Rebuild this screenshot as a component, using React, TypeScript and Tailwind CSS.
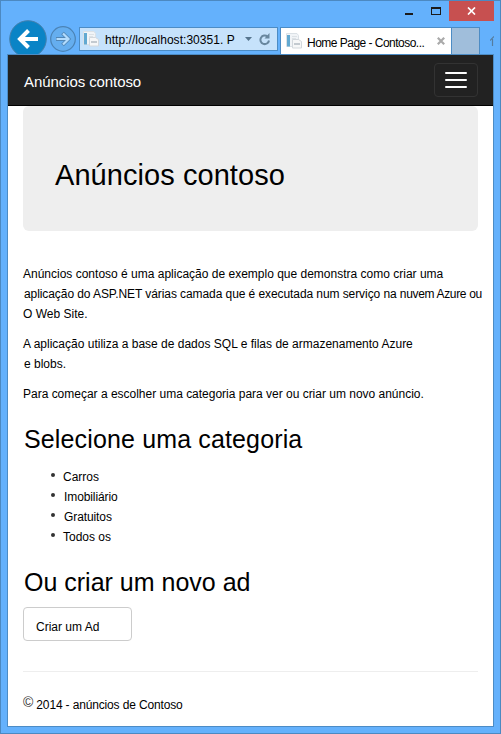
import type { ReactNode } from "react";

function PageIcon() {
  return (
    <svg width="16" height="16" viewBox="0 0 16 16" className="shrink-0">
      <path d="M.5.500h10.500l1.500 2v11H.5z" fill="#f1f4f7" stroke="#dbe1e6" />
      <path d="M1 2h3v11.500H1z" fill="#62a9d1" />
      <path d="M6 3.500h5M6 5.500h4" stroke="#dde2e6" />
      <path d="M6.500 6.500h6l3 2v6.500h-9z" fill="#f6f7f8" stroke="#d3d8dd" />
      <path d="M8 11h6" stroke="#c3cad0" strokeWidth="2" />
    </svg>
  );
}

function TitleBar() {
  return (
    <div className="flex h-[19px] shrink-0 justify-end pr-[6px]">
      <svg width="46" height="19" viewBox="0 0 46 19" shapeRendering="crispEdges">
        <rect x="2" y="12" width="8" height="2" fill="#1b1b1b" />
        <path d="M28 6h10v8H28zM29 8v5h8V8z" fill="#1b1b1b" fillRule="evenodd" />
      </svg>
      <div className="flex h-5 w-[45px] shrink-0 items-center justify-center bg-[#c75050]">
        <svg width="9" height="8" viewBox="0 0 9 8">
          <path d="M1 .5l7 7M8 .5l-7 7" stroke="#fff" strokeWidth="1.700" />
        </svg>
      </div>
    </div>
  );
}

function Toolbar() {
  return (
    <div className="flex h-[34px] shrink-0 overflow-hidden pl-[8px]">
      <svg width="70" height="34" viewBox="0 0 70 34" className="shrink-0">
        <circle cx="19" cy="19" r="18.300" fill="#0a84c6" stroke="#4580ad" strokeWidth="1" />
        <path d="M11 19H29M19.500 10.500L11 19l8.500 8.500" fill="none" stroke="#fff" strokeWidth="4" />
        <circle cx="54" cy="19" r="12.300" fill="#65aeef" stroke="#4b83b5" strokeWidth="1.200" />
        <path d="M47 19h13M53.500 13l6 6-6 6" fill="none" stroke="#5186b5" strokeWidth="3.800" />
        <path d="M47.500 19h12M54 13.500l5.500 5.500-5.500 5.500" fill="none" stroke="#b3dcfd" strokeWidth="2.200" />
      </svg>
      <div className="mt-[7px] flex h-6 w-[199px] shrink-0 items-center border border-[#4c8cc5] bg-[#c6e2fb] pl-[3px] text-[12px] text-black">
        <PageIcon />
        <span className="ml-[6px] mt-[2px] w-[135px] whitespace-nowrap tracking-[0.040px]">http://localhost:30351. P</span>
        <svg width="7" height="4" viewBox="0 0 7 4" className="ml-[5px]">
          <path d="M0 0h7L3.500 4z" fill="#56758e" />
        </svg>
        <svg width="12" height="13" viewBox="0 0 12 13" className="ml-[7px]">
          <path d="M8.500 3.500A4.300 4.300 0 1 0 10 7.500" fill="none" stroke="#68879f" strokeWidth="2" />
          <path d="M10.500 0v5.500H5.500z" fill="#68879f" />
        </svg>
      </div>
      <div className="ml-[2px] mt-[7px] flex h-[27px] w-[172px] shrink-0 items-center border border-b-0 border-[#4c8cc5] bg-white pl-[5px] text-[12px]">
        <PageIcon />
        <span className="ml-[5px] mt-[4px] w-[118px] whitespace-nowrap tracking-[-0.520px]">Home Page - Contoso...</span>
        <svg width="8" height="8" viewBox="0 0 8 8" className="ml-[12px]">
          <path d="M.8.8l6.400 6.400M7.200.8L.8 7.200" stroke="#aaa" strokeWidth="2.200" />
        </svg>
      </div>
      <div className="mt-[7px] h-[27px] w-7 shrink-0 border border-b-0 border-l-0 border-[#4c8cc5] bg-[#a0bedb]" />
      <svg width="4" height="34" viewBox="0 0 4 34" className="ml-[10px] shrink-0">
        <path d="M0 20.500l4-4M2.500 19v7" fill="none" stroke="#557c9e" strokeWidth="1.200" />
      </svg>
    </div>
  );
}

function Line({ children, className = "" }: { children: ReactNode; className?: string }) {
  return (
    <div className="h-5 whitespace-nowrap">
      <span className={className}>{children}</span>
    </div>
  );
}

const categories = [
  { name: "Carros", style: "ml-[8px]" },
  { name: "Imobiliário", style: "ml-[9px] tracking-[-0.100px]" },
  { name: "Gratuitos", style: "ml-[9px] tracking-[-0.100px]" },
  { name: "Todos os", style: "ml-[8px]" },
];

export default function App() {
  return (
    <div className="flex h-[734px] w-[501px] flex-col overflow-hidden border border-[#4c89c1] bg-[#64b1fc] font-['Liberation_Sans',Arial,sans-serif] text-black">
      <TitleBar />
      <Toolbar />
      <main className="mx-[6px] flex h-[673px] shrink-0 flex-col border border-[#4c8cc5] bg-white">
        <header className="flex h-[51px] shrink-0 items-center justify-between border-b border-black bg-[#222] pl-4 pr-[15px]">
          <span className="mt-[4px] whitespace-nowrap text-[15px] tracking-[-0.080px] text-white">Anúncios contoso</span>
          <div className="flex h-[34px] w-11 flex-col items-center justify-center gap-[5px] rounded-[4px] border border-[#333]">
            <div className="h-[2px] w-[22px] rounded-[1px] bg-white" />
            <div className="h-[2px] w-[22px] rounded-[1px] bg-white" />
            <div className="h-[2px] w-[22px] rounded-[1px] bg-white" />
          </div>
        </header>
        <div className="flex flex-col px-[15px]">
          <section className="h-[125px] rounded-[6px] bg-[#eee] pl-8 pt-[51px]">
            <h1 className="whitespace-nowrap text-[29px] leading-9 tracking-[0.060px]">Anúncios contoso</h1>
          </section>
          <div className="mt-[33px] text-[12px] leading-5">
            <Line>Anúncios contoso é uma aplicação de exemplo que demonstra como criar uma</Line>
            <Line className="ml-px tracking-[-0.080px]">
              aplicação do ASP.NET várias camada que é executada num serviço na{" "}
              <span className="tracking-[-0.340px]">nuvem Azure ou</span>
            </Line>
            <Line>O Web Site.</Line>
          </div>
          <div className="mt-[10px] text-[12px] leading-5">
            <Line>A aplicação utiliza a base de dados SQL e filas de armazenamento Azure</Line>
            <Line className="ml-px">e blobs.</Line>
          </div>
          <div className="mt-[10px] text-[12px] leading-5">
            <Line className="tracking-[-0.010px]">Para começar a escolher uma categoria para ver ou criar um novo anúncio.</Line>
          </div>
          <h2 className="ml-px mt-[20px] whitespace-nowrap text-[25px] leading-[30px] tracking-[0.140px]">Selecione uma categoria</h2>
          <ul className="mt-[13px] text-[12px] leading-5">
            {categories.map(({ name, style }) => (
              <li key={name} className="flex h-5 whitespace-nowrap pl-[28px]">
                <span className="mt-[6px] size-[4px] rounded-full bg-[#333]" />
                <span className={style}>{name}</span>
              </li>
            ))}
          </ul>
          <h2 className="ml-px mt-[20px] whitespace-nowrap text-[25px] leading-[30px]">Ou criar um novo ad</h2>
          <button className="mt-[10px] flex h-[34px] w-[109px] rounded-[4px] border border-[#ccc] bg-white pl-3 pt-[9px] text-[12px] leading-5">
            Criar um Ad
          </button>
          <hr className="mt-[30px] border-[#eee]" />
          <footer className="mt-[22px] flex text-[12px] leading-5">
            <span className="-mt-[2px] mr-[3px] text-[14px] text-[#333]">©</span>
            <span className="mt-px whitespace-nowrap tracking-[-0.150px]">2014 - anúncios de Contoso</span>
          </footer>
        </div>
      </main>
    </div>
  );
}
